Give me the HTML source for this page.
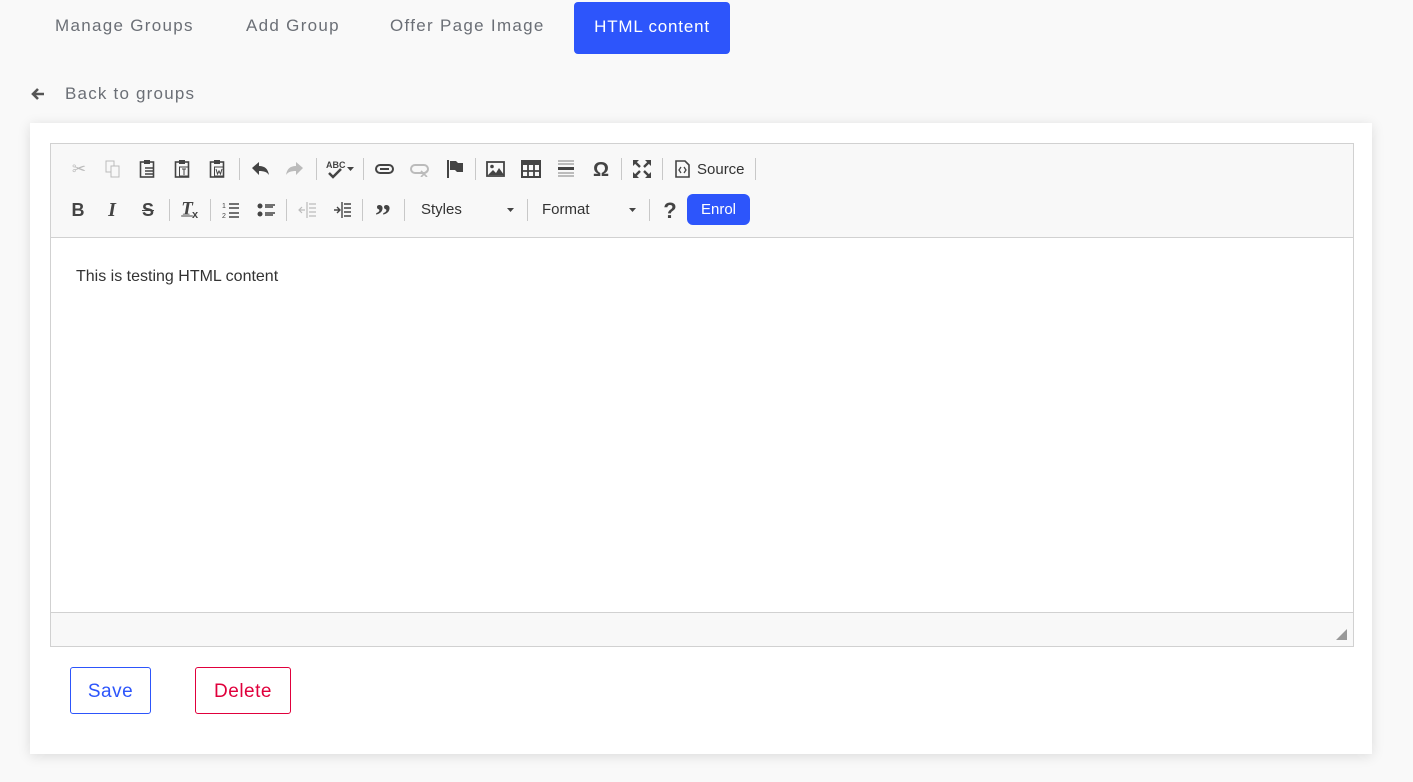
<!DOCTYPE html>
<html><head><style>
*{box-sizing:border-box;margin:0;padding:0}
body{width:1413px;height:782px;background:#f9f9f9;font-family:"Liberation Sans",sans-serif;position:relative;overflow:hidden}
.a{position:absolute}
.tab{position:absolute;top:16px;font-size:17px;color:#6b6f76;letter-spacing:1.3px}
.card{position:absolute;left:30px;top:123px;width:1342px;height:631px;background:#fff;box-shadow:0 2px 12px rgba(0,0,0,.12)}
.ed{position:absolute;left:50px;top:143px;width:1304px;height:504px;border:1px solid #d1d1d1;background:#fff}
.tb{position:absolute;left:0;top:0;width:1302px;height:94px;background:#f8f8f8;border-bottom:1px solid #d1d1d1}
.bb{position:absolute;left:0;bottom:0;width:1302px;height:34px;background:#f8f8f8;border-top:1px solid #d1d1d1}
.sep{position:absolute;width:1px;height:22px;background:#c8c8c8}
.ic{position:absolute;font-size:17px;color:#444;transform:translate(-50%,-50%);line-height:1}
.dis{color:#bbb}
svg{position:absolute}
</style></head><body>
<div class="tab" style="left:55px">Manage Groups</div>
<div class="tab" style="left:246px">Add Group</div>
<div class="tab" style="left:390px">Offer Page Image</div>
<div class="a" style="left:574px;top:2px;width:156px;height:52px;background:#2d55fb;border-radius:4px;color:#fff;font-size:17px;text-align:center;line-height:50px;letter-spacing:.8px">HTML content</div>
<svg style="left:30px;top:86px" width="16" height="16" viewBox="0 0 16 16"><path d="M14 8H3M8 3L3 8l5 5" stroke="#555" stroke-width="2.6" fill="none"/></svg>
<div class="a" style="left:65px;top:84px;font-size:17px;color:#6b6f76;letter-spacing:1.2px">Back to groups</div>
<div class="card"></div>
<div class="ed">
<div class="tb"></div>
<div class="bb"><svg style="right:6px;bottom:6px" width="11" height="11"><path d="M11 0V11H0Z" fill="#999"/></svg></div>
<div class="a" style="left:25px;top:124px;font-size:16px;color:#333">This is testing HTML content</div>
</div>
<div class="ic dis" style="left:79px;top:169px">✂</div>
<svg style="left:104px;top:160px" width="18" height="18"><rect x="2" y="1" width="8" height="11" fill="none" stroke="#bbb"/><rect x="7" y="6" width="8" height="11" fill="#f8f8f8" stroke="#bbb"/></svg>
<svg style="left:139px;top:159px" width="18" height="20"><rect x="1.5" y="3" width="13" height="15" fill="none" stroke="#444" stroke-width="1.6"/><rect x="5" y="1" width="6" height="4" fill="#444"/><path d="M6 9h8M6 12h8M6 15h8" stroke="#444" stroke-width="1.4"/></svg>
<svg style="left:174px;top:159px" width="18" height="20"><rect x="1.5" y="3" width="13" height="15" fill="none" stroke="#444" stroke-width="1.6"/><rect x="5" y="1" width="6" height="4" fill="#444"/><rect x="5.5" y="8" width="9" height="9" fill="none" stroke="#444"/><path d="M8 10h4M10 10v6" stroke="#444"/></svg>
<svg style="left:209px;top:159px" width="18" height="20"><rect x="1.5" y="3" width="13" height="15" fill="none" stroke="#444" stroke-width="1.6"/><rect x="5" y="1" width="6" height="4" fill="#444"/><rect x="5.5" y="8" width="9" height="9" fill="none" stroke="#444"/><path d="M7 10l1.5 5 1.5-3 1.5 3 1.5-5" stroke="#444" fill="none"/></svg>
<div class="sep" style="left:239px;top:158px"></div>
<svg style="left:250px;top:160px" width="20" height="18"><path d="M2 8l7-6v4c6 0 9 3 10 9-2-3-5-4-10-4v4z" fill="#444"/></svg>
<svg style="left:285px;top:160px" width="20" height="18"><path d="M18 8l-7-6v4C5 6 2 9 1 15c2-3 5-4 10-4v4z" fill="#bbb"/></svg>
<div class="sep" style="left:316px;top:158px"></div>
<div class="a" style="left:326px;top:160px;font-size:9px;font-weight:bold;color:#444">ABC</div>
<svg style="left:327px;top:168px" width="16" height="12"><path d="M2 5l4 4 8-8" stroke="#444" stroke-width="2.5" fill="none"/></svg>
<svg style="left:347px;top:167px" width="7" height="4"><path d="M0 0h7L3.5 4z" fill="#444"/></svg>
<div class="sep" style="left:363px;top:158px"></div>
<svg style="left:375px;top:163px" width="19" height="12"><rect x="1" y="2" width="17" height="8" rx="4" fill="none" stroke="#444" stroke-width="2"/><path d="M5 6h9" stroke="#444" stroke-width="2"/></svg>
<svg style="left:410px;top:163px" width="19" height="14"><rect x="1" y="2" width="17" height="8" rx="4" fill="none" stroke="#bbb" stroke-width="2"/><path d="M11 8l6 6M17 8l-6 6" stroke="#bbb" stroke-width="1.6"/></svg>
<svg style="left:446px;top:159px" width="18" height="20"><path d="M2 1v18" stroke="#444" stroke-width="2"/><path d="M4 2h6l2 2h5v9h-6l-2-2H4z" fill="#444"/></svg>
<div class="sep" style="left:475px;top:158px"></div>
<svg style="left:486px;top:161px" width="19" height="16"><rect x="1" y="1" width="17" height="14" fill="none" stroke="#444" stroke-width="1.8"/><circle cx="6" cy="5.5" r="1.8" fill="#444"/><path d="M2 14l5-5 3 3 3-5 5 7z" fill="#444"/></svg>
<svg style="left:521px;top:160px" width="20" height="18"><rect x="1" y="1" width="18" height="16" fill="none" stroke="#444" stroke-width="2"/><rect x="1" y="1" width="18" height="4" fill="#444"/><path d="M7 5v12M13 5v12M1 11h18" stroke="#444" stroke-width="1.8"/></svg>
<svg style="left:557px;top:159px" width="18" height="20"><path d="M1 2h16M1 5h16M1 14h16M1 17h16" stroke="#999" stroke-width="1.2"/><path d="M1 9.5h16" stroke="#444" stroke-width="3"/></svg>
<div class="ic" style="left:601px;top:170px;font-size:20px;font-weight:bold">Ω</div>
<div class="sep" style="left:621px;top:158px"></div>
<svg style="left:633px;top:160px" width="18" height="18"><g stroke="#444" stroke-width="2.4" fill="#444"><path d="M1 1l6 6M17 1l-6 6M1 17l6-6M17 17l-6-6"/></g><path d="M0 0h6L0 6zM18 0h-6l6 6zM0 18h6l-6-6zM18 18h-6l6-6z" fill="#444"/></svg>
<div class="sep" style="left:662px;top:158px"></div>
<svg style="left:675px;top:160px" width="15" height="18"><path d="M1 1h9l4 4v12H1z" fill="none" stroke="#444" stroke-width="1.6"/><path d="M6 7l-2 3 2 3M9 7l2 3-2 3" stroke="#444" fill="none" stroke-width="1.3"/></svg>
<div class="a" style="left:697px;top:161px;font-size:15px;color:#333">Source</div>
<div class="sep" style="left:755px;top:158px"></div>
<div class="ic" style="left:78px;top:210px;font-weight:bold;font-size:18px">B</div>
<div class="ic" style="left:112px;top:210px;font-weight:bold;font-style:italic;font-family:'Liberation Serif',serif;font-size:20px">I</div>
<div class="ic" style="left:148px;top:210px;font-weight:bold;font-size:18px;text-decoration:line-through">S</div>
<div class="sep" style="left:169px;top:199px"></div>
<div class="ic" style="left:187px;top:209px;font-weight:bold;font-style:italic;font-family:'Liberation Serif',serif;font-size:19px;text-decoration:underline">T</div>
<div class="a" style="left:192px;top:209px;font-size:11px;font-weight:bold;color:#444">x</div>
<div class="sep" style="left:210px;top:199px"></div>
<svg style="left:222px;top:201px" width="18" height="18"><text x="0" y="7" font-size="7" fill="#444" font-family="Liberation Sans">1</text><text x="0" y="17" font-size="7" fill="#444" font-family="Liberation Sans">2</text><path d="M7 3h10M7 7h10M7 12h10M7 16h10" stroke="#444" stroke-width="1.6"/></svg>
<svg style="left:257px;top:201px" width="18" height="18"><circle cx="3" cy="5" r="2.5" fill="#444"/><circle cx="3" cy="13" r="2.5" fill="#444"/><path d="M8 4h10M8 6h8M8 12h10M8 14h8" stroke="#444" stroke-width="1.4"/></svg>
<div class="sep" style="left:286px;top:199px"></div>
<svg style="left:298px;top:201px" width="18" height="18"><path d="M9 1v16M11 3h7M11 7h7M11 11h7M11 15h7M1 9h6M4 6L1 9l3 3" stroke="#bbb" stroke-width="1.2" fill="none"/></svg>
<svg style="left:333px;top:201px" width="18" height="18"><path d="M9 1v16M11 3h7M11 7h7M11 11h7M11 15h7M1 9h6M4 6l3 3-3 3" stroke="#444" stroke-width="1.4" fill="none"/></svg>
<div class="sep" style="left:362px;top:199px"></div>
<div class="ic" style="left:383px;top:215px;font-size:32px;font-weight:bold;font-family:'Liberation Serif',serif">”</div>
<div class="sep" style="left:404px;top:199px"></div>
<div class="a" style="left:421px;top:201px;font-size:15px;color:#333">Styles</div>
<svg style="left:507px;top:208px" width="7" height="4"><path d="M0 0h7L3.5 4z" fill="#444"/></svg>
<div class="sep" style="left:527px;top:199px"></div>
<div class="a" style="left:542px;top:201px;font-size:15px;color:#333">Format</div>
<svg style="left:629px;top:208px" width="7" height="4"><path d="M0 0h7L3.5 4z" fill="#444"/></svg>
<div class="sep" style="left:649px;top:199px"></div>
<div class="ic" style="left:670px;top:211px;font-size:22px;font-weight:bold">?</div>
<div class="a" style="left:687px;top:194px;width:63px;height:31px;background:#2d55fb;border-radius:6px;color:#fff;font-size:15px;text-align:center;line-height:31px">Enrol</div>
<div class="a" style="left:70px;top:667px;width:81px;height:47px;border:1px solid #2d55fb;border-radius:3px;color:#2d55fb;font-size:19px;text-align:center;line-height:47px;letter-spacing:.5px">Save</div>
<div class="a" style="left:195px;top:667px;width:96px;height:47px;border:1px solid #e0003c;border-radius:3px;color:#e0003c;font-size:19px;text-align:center;line-height:47px;letter-spacing:.5px">Delete</div>
</body></html>
